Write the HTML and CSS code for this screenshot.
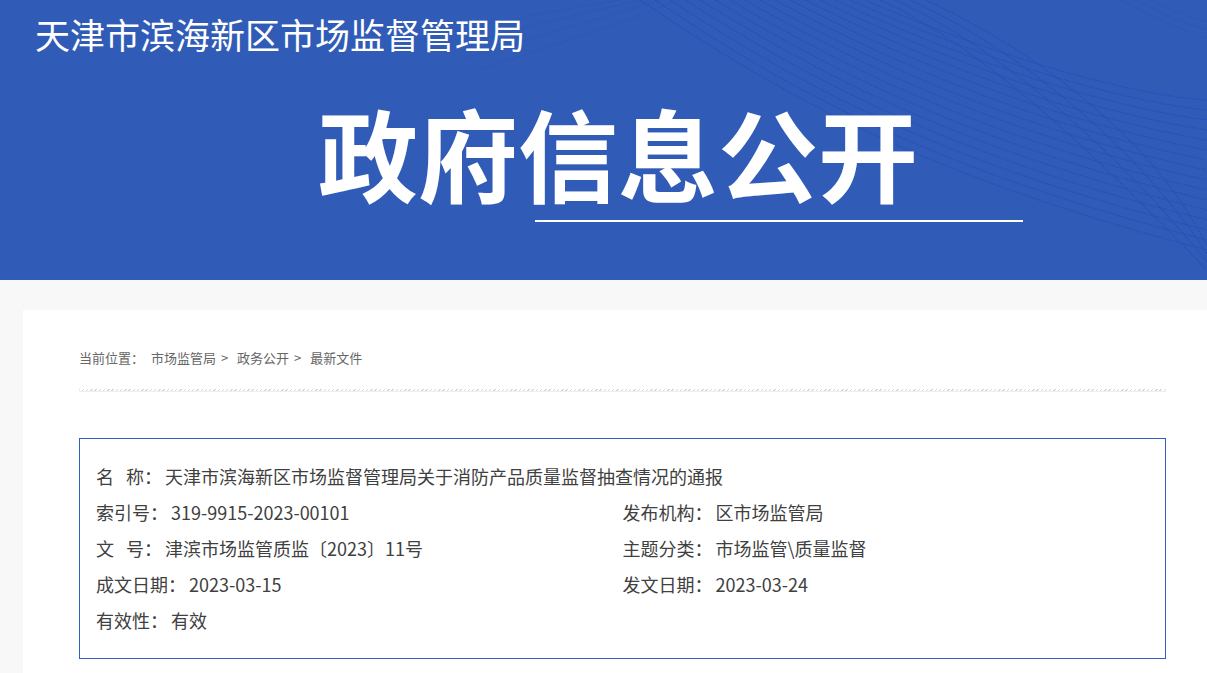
FILE: index.html
```html
<!DOCTYPE html>
<html lang="zh-CN">
<head>
    <meta charset="UTF-8">
    <meta name="viewport" content="width=device-width, initial-scale=1.0">
    <title>政府信息公开</title>
    <link rel="stylesheet" href="styles.css">
</head>
<body>
    <div class="banner">
        <!-- 背景弧线 -->
        <svg class="banner-lines" width="1207" height="280" viewBox="0 0 1207 280">
            <g fill="none" stroke="#2650bd" stroke-width="1.2" stroke-dasharray="2 1">
                <path d="M640 0 C760 80 900 170 1207 250"/>
                <path d="M655 0 C775 80 915 165 1207 240"/>
                <path d="M670 0 C790 78 930 160 1207 230"/>
                <path d="M685 0 C805 76 945 155 1207 220"/>
                <path d="M700 0 C820 74 960 150 1207 210"/>
                <path d="M715 0 C835 72 975 145 1207 200"/>
                <path d="M730 0 C850 70 990 140 1207 190"/>
                <path d="M745 0 C865 68 1005 135 1207 180"/>
                <path d="M760 0 C880 66 1020 130 1207 170"/>
                <path d="M775 0 C895 64 1035 125 1207 160"/>
                <path d="M790 0 C910 62 1050 120 1207 150"/>
                <path d="M805 0 C925 60 1065 115 1207 140"/>
                <path d="M820 0 C940 58 1080 110 1207 130"/>
                <path d="M835 0 C955 56 1095 105 1207 120"/>
                <path d="M850 0 C970 54 1110 100 1207 110"/>
                <path d="M865 0 C985 52 1125 95 1207 100"/>
                <path d="M880 0 C990 50 1110 170 1207 270"/>
                <path d="M895 0 C1005 50 1125 160 1207 262"/>
                <path d="M910 0 C1020 50 1140 150 1207 254"/>
                <path d="M925 0 C1035 50 1155 140 1207 246"/>
            </g>
            <g fill="none" stroke="#2954ba" stroke-width="1" stroke-dasharray="1 1">
                <path d="M420 40 C500 20 560 10 620 0"/>
                <path d="M440 50 C520 28 580 14 640 0"/>
                <path d="M460 60 C540 36 600 18 660 0"/>
                <path d="M480 70 C560 44 620 22 680 0"/>
                <path d="M1120 0 C1150 15 1180 30 1207 38"/>
                <path d="M1135 0 C1160 12 1185 24 1207 30"/>
                <path d="M1150 0 C1170 9 1190 18 1207 22"/>
            </g>
        </svg>
        <div class="site-name">天津市滨海新区市场监督管理局</div>
        <h1 class="big-title">政府信息公开</h1>
        <div class="title-line"></div>
    </div>

    <div class="main">
        <div class="card">
            <div class="inner">
                <div class="crumb">
                    当前位置：
                    <a href="#">市场监管局</a><span class="arr">&gt;</span>
                    <a href="#">政务公开</a><span class="arr">&gt;</span>
                    <a href="#">最新文件</a>
                </div>
                <div class="dots"></div>

                <div class="info">
                    <div class="row full"><span class="lab">名<i class="gap"></i>称：</span><span class="val">天津市滨海新区市场监督管理局关于消防产品质量监督抽查情况的通报</span></div>
                    <div class="row"><span class="lab">索引号：</span><span class="val">319-9915-2023-00101</span></div>
                    <div class="row"><span class="lab">发布机构：</span><span class="val">区市场监管局</span></div>
                    <div class="row"><span class="lab">文<i class="gap"></i>号：</span><span class="val">津滨市场监管质监〔2023〕11号</span></div>
                    <div class="row"><span class="lab">主题分类：</span><span class="val">市场监管\质量监督</span></div>
                    <div class="row"><span class="lab">成文日期：</span><span class="val">2023-03-15</span></div>
                    <div class="row"><span class="lab">发文日期：</span><span class="val">2023-03-24</span></div>
                    <div class="row"><span class="lab">有效性：</span><span class="val">有效</span></div>
                </div>
            </div>
        </div>
    </div>
</body>
</html>
```

FILE: styles.css
```css
*{
    margin: 0;
    padding: 0;
    box-sizing: border-box;
}

body{
    background-color: #f8f8f8;
    font-family: "Noto Sans CJK SC", "Noto Sans", sans-serif;
    overflow: hidden;
}

a{
    color: inherit;
    text-decoration: none;
}

/* 顶部蓝色横幅 */
.banner{
    position: relative;
    height: 280px;
    background-color: #305cb7;
    color: #fff;
    overflow: hidden;
}

/* 背景线条只是装饰，压在文字下面 */
.banner-lines{
    position: absolute;
    left: 0;
    top: 0;
}

.site-name{
    position: relative;
    padding: 12px 0 0 35px;
    font-size: 35px;
    line-height: 44px;
    font-weight: 400;
}

.big-title{
    position: relative;
    margin: 46px 0 0 318px;
    font-size: 100px;
    line-height: 100px;
    font-weight: 700;
}

.title-line{
    position: relative;
    width: 488px;
    height: 2px;
    margin: 18px 0 0 535px;
    background-color: #fff;
}

/* 主体 */
.main{
    padding-top: 30px;
}

.card{
    margin-left: 23px;
    height: 400px;
    background-color: #fff;
}

.inner{
    width: 1087px;
    margin-left: 56px;
    padding-top: 37px;
}

.crumb{
    font-size: 13px;
    line-height: 22px;
    color: #666;
}

.crumb a{
    margin-left: 4px;
}

.crumb .arr{
    margin: 0 2px 0 5px;
}

.dots{
    height: 3px;
    margin-top: 20px;
    background: repeating-linear-gradient(135deg, #d8d8d8 0 1px, transparent 1px 3px);
    border-bottom: 1px solid #eee;
}

/* 文件信息框 */
.info{
    display: grid;
    grid-template-columns: 1fr 1fr;
    margin-top: 46px;
    padding: 19px 16px 20px;
    border: 1px solid #2f5fbf;
}

.row{
    font-size: 18px;
    line-height: 36px;
    color: #404040;
    white-space: nowrap;
}

.row.full{
    grid-column: 1 / 3;
}

.val{
    margin-left: 3px;
}

.gap{
    display: inline-block;
    width: 12px;
}
```
